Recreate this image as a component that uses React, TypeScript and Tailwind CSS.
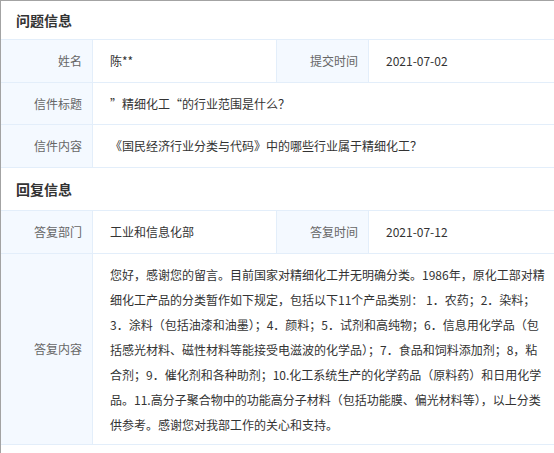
import React from "react";

const font = { fontFamily: '"Noto Sans CJK SC", "Noto Sans", sans-serif' };

function Label({ children, className = "" }: { children: React.ReactNode; className?: string }) {
  return (
    <div
      className={`w-[92px] shrink-0 bg-[#f4f9ff] border-r border-[#e3eefa] flex items-center justify-end pr-[10px] text-[#666666] ${className}`}
    >
      {children}
    </div>
  );
}

function Value({ children, className = "" }: { children: React.ReactNode; className?: string }) {
  return <div className={`flex items-center pl-[17px] text-[#333333] ${className}`}>{children}</div>;
}

const lines = [
  "您好，感谢您的留言。目前国家对精细化工并无明确分类。1986年，原化工部对精",
  "细化工产品的分类暂作如下规定，包括以下11个产品类别： 1．农药；2．染料；",
  "3．涂料（包括油漆和油墨）；4．颜料；5．试剂和高纯物；6．信息用化学品（包",
  "括感光材料、磁性材料等能接受电滋波的化学品）；7．食品和饲料添加剂；8，粘",
  "合剂；9．催化剂和各种助剂；10.化工系统生产的化学药品（原料药）和日用化学",
  "品。11.高分子聚合物中的功能高分子材料（包括功能膜、偏光材料等），以上分类",
  "供参考。感谢您对我部工作的关心和支持。",
];

export default function App() {
  return (
    <div
      className="w-[554px] h-[453px] bg-white border-t border-l border-[#a3a3a3] overflow-hidden text-[12px]"
      style={font}
    >
      <div className="h-[38px] flex items-center pl-[15px] text-[14px] font-bold text-[#333333]">问题信息</div>
      <div className="border-t border-[#e3eefa]">
        <div className="flex h-[43px] border-b border-[#e3eefa]">
          <Label>姓名</Label>
          <Value className="w-[184px] border-r border-[#e3eefa]">陈**</Value>
          <Label>提交时间</Label>
          <Value className="flex-1">2021-07-02</Value>
        </div>
        <div className="flex h-[42px] border-b border-[#e3eefa]">
          <Label>信件标题</Label>
          <Value className="flex-1">”精细化工“的行业范围是什么？</Value>
        </div>
        <div className="flex h-[43px] border-b border-[#e3eefa]">
          <Label>信件内容</Label>
          <Value className="flex-1">《国民经济行业分类与代码》中的哪些行业属于精细化工？</Value>
        </div>
      </div>
      <div className="h-[42px] flex items-center pl-[15px] text-[14px] font-bold text-[#333333]">回复信息</div>
      <div className="border-t border-[#e3eefa]">
        <div className="flex h-[43px] border-b border-[#e3eefa]">
          <Label>答复部门</Label>
          <Value className="w-[184px] border-r border-[#e3eefa]">工业和信息化部</Value>
          <Label>答复时间</Label>
          <Value className="flex-1">2021-07-12</Value>
        </div>
        <div className="flex h-[191px] border-b border-[#e3eefa]">
          <Label>答复内容</Label>
          <div className="flex-1 pl-[17px] py-[8px] text-[#333333] leading-[25px]">
            {lines.map((l, i) => (
              <div key={i} className="whitespace-nowrap">
                {l}
              </div>
            ))}
          </div>
        </div>
      </div>
    </div>
  );
}
